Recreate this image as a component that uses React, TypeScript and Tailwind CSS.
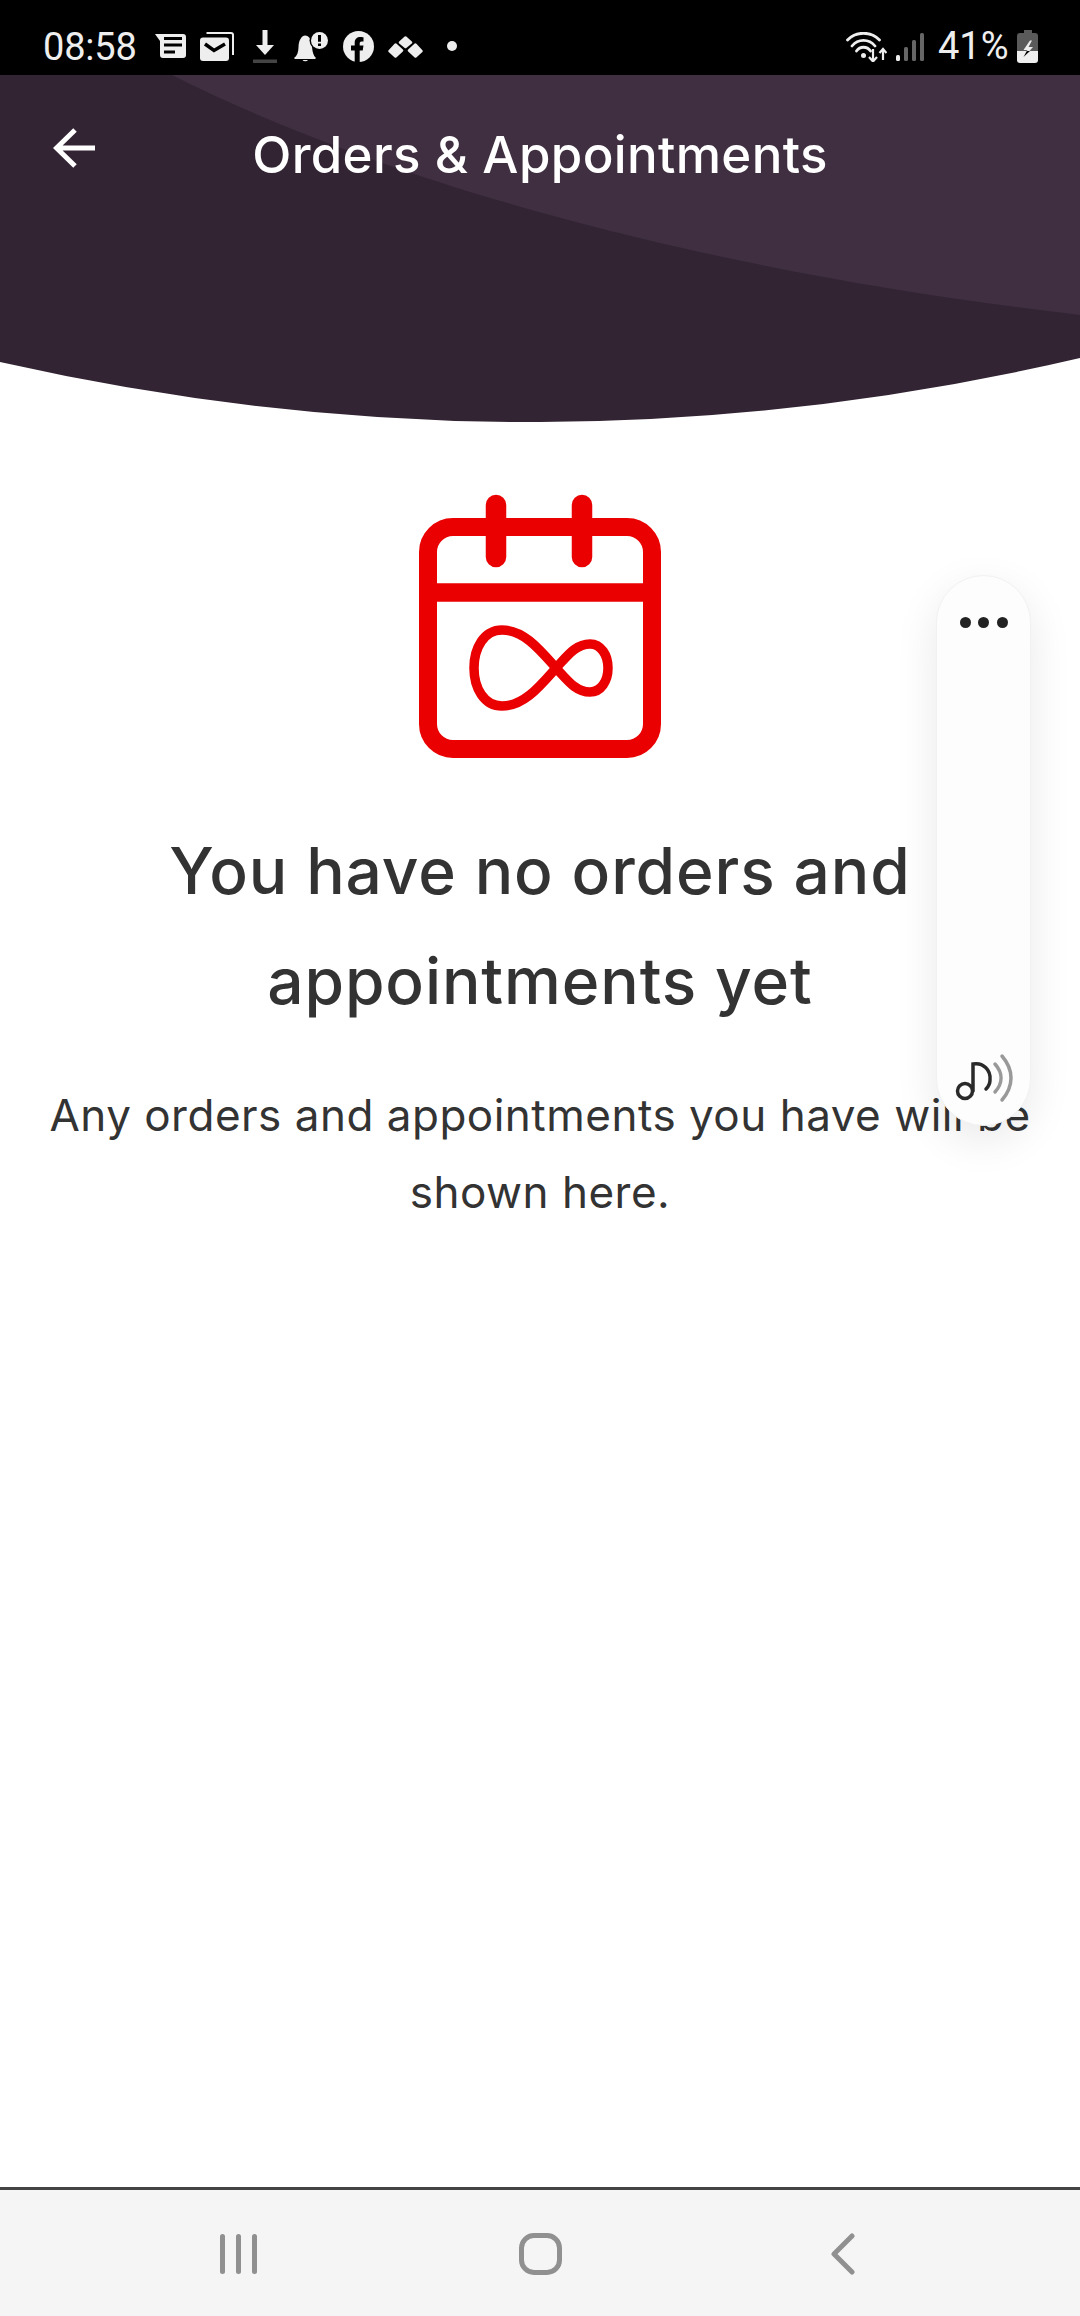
import React from "react";

const C = "#eeeeee";
const roboto = "font-['Roboto',sans-serif] text-[38px] font-normal leading-none text-[#eeeeee]";

function StatusLeft() {
  return (
    <div className="flex items-start pl-[42px] h-full">
      <span className={`${roboto} w-[113px] mt-[28px] pl-[1px] tracking-[-0.2px]`}>08:58</span>
      <svg width="31" height="24" viewBox="0 0 31 24" className="mt-[34px]">
        <path d="M0 0H28a3 3 0 0 1 3 3V21a3 3 0 0 1-3 3H8a3 3 0 0 1-3-3V7Z" fill={C} />
        <path d="M9 4.500H27M9 11H27M9 18H20" stroke="#000" strokeWidth="3" />
      </svg>
      <svg width="34" height="29" viewBox="0 0 34 29" className="ml-[14px] mt-[32px]">
        <path d="M6.500 1H31a2 2 0 0 1 2 2V23" stroke={C} strokeWidth="2" fill="none" />
        <rect x="0" y="5.500" width="29" height="23.500" rx="3" fill={C} />
        <path d="M5 12L14 18.500L25 12" stroke="#000" strokeWidth="3.500" fill="none" />
      </svg>
      <svg width="24" height="33" viewBox="0 0 24 33" className="ml-[19px] mt-[30px]">
        <path d="M12 0V16" stroke={C} strokeWidth="5" />
        <path d="M3 15H21L12 25Z" fill={C} />
        <rect x="0" y="29.500" width="24" height="3.500" fill="#444" />
      </svg>
      <svg width="34" height="30" viewBox="0 0 34 30" className="ml-[17px] mt-[32px]">
        <path d="M0 26C3 24 4.500 20 4.500 15C4.500 8 8 3.500 11 3.500C15 3.500 18 8 18 13C18 19 19.500 24 22 26L21 27H1Z" fill={C} />
        <path d="M8.500 28H14a3 2 0 0 1-5.500 0Z" fill={C} />
        <circle cx="25.500" cy="8.500" r="10" fill="#000" />
        <circle cx="25.500" cy="8.500" r="8.500" fill={C} />
        <path d="M25.500 3V9.800M25.500 11.500V14" stroke="#000" strokeWidth="3" />
      </svg>
      <svg width="31" height="31" viewBox="0 0 31 31" className="ml-[15px] mt-[31px]">
        <circle cx="15.500" cy="15.500" r="15.500" fill={C} />
        <path d="M11.700 31V19.500H8V14.500H11.700V11.500C11.700 8 14 6 17.500 6C19 6 20.500 6.300 20.500 6.300V10.500H18.500C17 10.500 16.700 11.500 16.700 12.500V14.500H20.500L19.700 19.500H16.700V31Z" fill="#000" />
      </svg>
      <svg width="35" height="22" viewBox="0 0 35 22" className="ml-[14px] mt-[36px]">
        <path d="M17.500 1.500L23 6.500L17.500 11L12 6.500Z" fill={C} stroke={C} strokeWidth="2.500" strokeLinejoin="round" />
        <path d="M7.500 8.500L14 14.500L7.500 20.500L1.500 15Z" fill={C} stroke={C} strokeWidth="2.500" strokeLinejoin="round" />
        <path d="M27.500 8.500L21 14.500L27.500 20.500L33.500 15Z" fill={C} stroke={C} strokeWidth="2.500" strokeLinejoin="round" />
      </svg>
      <div className="ml-[24px] mt-[41px] w-[10px] h-[10px] rounded-full bg-[#eeeeee]" />
    </div>
  );
}

function StatusRight() {
  return (
    <div className="flex items-start h-full pr-[42px]">
      <svg width="41" height="30" viewBox="0 0 41 30" className="mt-[32px]">
        <path d="M1.500 8C10 -1 25 -1 33.500 8M6 14C12 6.500 23 6.500 29 14M10.500 19C14 14 21 14 24.500 19" stroke={C} strokeWidth="2.800" fill="none" strokeLinecap="round" />
        <circle cx="17.500" cy="23.500" r="2.500" fill={C} />
        <path d="M27 17V29M23 25L27 29.500L31 25M37 28V17.500M33.500 21L37 17L40.500 21" stroke={C} strokeWidth="2.200" fill="none" />
      </svg>
      <svg width="28" height="28" viewBox="0 0 28 28" className="ml-[9px] mt-[33px]">
        <rect x="0" y="22" width="4" height="6" rx="1.500" fill={C} />
        <rect x="8" y="14" width="4" height="14" rx="1.500" fill="#666" />
        <rect x="16" y="7" width="4" height="21" rx="1.500" fill="#666" />
        <rect x="24" y="0" width="4" height="28" rx="1.500" fill="#666" />
      </svg>
      <span className={`${roboto} ml-[14px] w-[79px] mt-[27px]`}>41%</span>
      <svg width="21" height="33" viewBox="0 0 21 33" className="mt-[30px]">
        <path d="M7 0H15V3H18a3 3 0 0 1 3 3V21H0V6a3 3 0 0 1 3-3H7Z" fill="#5a5a5a" />
        <path d="M0 21H21V30a3 3 0 0 1-3 3H3a3 3 0 0 1-3-3Z" fill={C} />
        <path d="M13 10.500L6.500 20H10.500L9.500 21H12.500L16 17H11.500L15 10.500Z" fill={C} />
        <path d="M9.800 21L6.500 27L13 21Z" fill="#000" />
      </svg>
    </div>
  );
}

function CalendarIcon() {
  return (
    <svg width="260" height="280" viewBox="410 490 260 280" className="block">
      <rect x="428" y="527" width="224" height="222" rx="25" fill="none" stroke="#ea0000" strokeWidth="18" />
      <path d="M428 592.500H652" stroke="#ea0000" strokeWidth="18.500" />
      <path d="M496 505V557M582 505V557" stroke="#ea0000" strokeWidth="20.500" strokeLinecap="round" />
      <path
        d="M556 668C540 650 524 630 502 630C484 630 474 648 474 668C474 688 484 706 502 706C524 706 540 686 556 668C568 655 576 644 590 644C601 644 608 655 608 668C608 681 601 692 590 692C576 692 568 681 556 668Z"
        fill="none"
        stroke="#ea0000"
        strokeWidth="9.500"
      />
    </svg>
  );
}

export default function App() {
  return (
    <div className="w-[1080px] h-[2316px] flex flex-col bg-white overflow-hidden relative font-['Inter',sans-serif]">
      <div className="h-[75px] shrink-0 bg-black flex justify-between">
        <StatusLeft />
        <StatusRight />
      </div>

      <header className="relative h-[347px] shrink-0">
        <svg width="1080" height="347" viewBox="0 0 1080 347" className="absolute inset-0">
          <path d="M0 0H1080V283Q540 409 0 287Z" fill="#322433" />
          <path d="M172 0C350 90 650 190 1080 240V0Z" fill="#3f2f40" />
        </svg>
        <div className="relative flex items-center justify-center h-[158px]">
          <svg width="42" height="42" viewBox="0 0 42 42" className="absolute left-[53px] top-[52px]">
            <path d="M42 21H3.500M22 3L3.500 21L22 39" stroke="#fff" strokeWidth="5" fill="none" />
          </svg>
          <h1 className="text-white text-[51px] tracking-[0.35px] font-medium leading-none">Orders &amp; Appointments</h1>
        </div>
      </header>

      <main className="flex flex-col items-center mt-[68px]">
        <CalendarIcon />
        <h2 className="mt-[46px] text-[#333333] text-[64px] tracking-[0.9px] font-medium leading-[110px] text-center w-[800px]">
          You have no orders and appointments yet
        </h2>
        <p className="mt-[41px] text-[#333333] text-[44px] tracking-[0.5px] leading-[77px] text-center w-[1040px]">
          Any orders and appointments you have will be shown here.
        </p>
      </main>

      <div className="absolute left-[936px] top-[575px] w-[95px] h-[551px] rounded-[48px] bg-[#fdfdfd] border border-[#f1f1f1] shadow-[0_14px_44px_rgba(0,0,0,0.09)] flex flex-col items-center justify-between pt-[41px] pb-[21px]">
        <div className="flex gap-[7.500px]">
          <span className="w-[11px] h-[11px] rounded-full bg-[#222222]" />
          <span className="w-[11px] h-[11px] rounded-full bg-[#222222]" />
          <span className="w-[11px] h-[11px] rounded-full bg-[#222222]" />
        </div>
        <svg width="62" height="54" viewBox="950 1050 62 54" className="ml-[1px]">
          <circle cx="962" cy="1091" r="7.500" fill="none" stroke="#2a2a2a" strokeWidth="3.500" />
          <path d="M970 1091V1064C980 1062 988 1070 987 1080C987 1084 985 1087 983 1089" fill="none" stroke="#2a2a2a" strokeWidth="3.500" strokeLinecap="round" />
          <path d="M992 1064C1000 1073 1000 1083 992 1092" fill="none" stroke="#999999" strokeWidth="3.500" strokeLinecap="round" />
          <path d="M999 1056C1011 1070 1011 1086 999 1100" fill="none" stroke="#999999" strokeWidth="3.500" strokeLinecap="round" />
        </svg>
      </div>

      <div className="flex-1" />

      <nav className="h-[129px] shrink-0 bg-[#f5f5f5] border-t-[3px] border-[#444444] flex items-center pl-[220px] pt-[1px]">
        <div className="flex gap-[11px]">
          <span className="w-[5px] h-[40px] rounded-full bg-[#909090]" />
          <span className="w-[5px] h-[40px] rounded-full bg-[#909090]" />
          <span className="w-[5px] h-[40px] rounded-full bg-[#909090]" />
        </div>
        <div className="ml-[262px] w-[43px] h-[42px] rounded-[15px] border-[5px] border-[#909090]" />
        <svg width="24" height="42" viewBox="0 0 24 42" className="ml-[269px]">
          <path d="M21 3L3 21L21 39" fill="none" stroke="#909090" strokeWidth="5" strokeLinecap="round" strokeLinejoin="round" />
        </svg>
      </nav>
    </div>
  );
}
